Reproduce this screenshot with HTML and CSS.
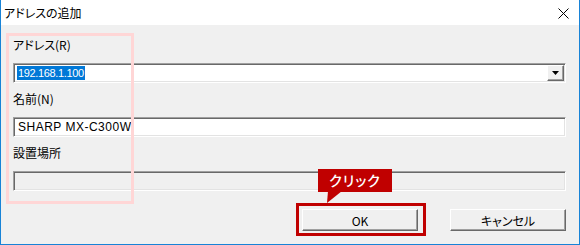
FILE: index.html
```html
<!DOCTYPE html>
<html lang="ja">

<head>
  <meta charset="UTF-8">
  <meta name="viewport" content="width=device-width, initial-scale=1.0">
  <title>アドレスの追加</title>
  <link rel="stylesheet" href="styles.css">
</head>

<body>
  <div class="window">
    <div class="titlebar">
      <span class="title">アドレスの追加</span>
      <svg class="close" width="11" height="11" viewBox="0 0 11 11">
        <path d="M0.5 0.5 L10.5 10.5 M10.5 0.5 L0.5 10.5" stroke="#000" stroke-width="1" fill="none" />
      </svg>
    </div>

    <div class="client">
      <div class="group">
        <span class="label">アドレス(R)</span>
        <div class="sunken combo">
          <span class="value"><span class="selected">192.168.1.100</span></span>
          <span class="drop">
            <svg width="7" height="4" viewBox="0 0 7 4"><path d="M0 0 H7 L3.5 4 Z" fill="#000" /></svg>
          </span>
        </div>
      </div>

      <div class="group">
        <span class="label">名前(N)</span>
        <div class="sunken edit">SHARP MX-C300W</div>
      </div>

      <div class="group">
        <span class="label">設置場所</span>
        <div class="sunken edit disabled"></div>
      </div>

      <div class="buttons">
        <span class="marked">
          <button type="button" class="btn">OK</button>
          <span class="callout">クリック</span>
        </span>
        <button type="button" class="btn">キャンセル</button>
      </div>

      <!-- 入力欄の注目枠 -->
      <div class="group-mark"></div>
    </div>
  </div>
</body>

</html>
```

FILE: styles.css
```css
body {
  margin: 0;
  font-family: "Noto Sans CJK JP", sans-serif;
  font-size: 12px;
  color: #000;
}

.window {
  width: 580px;
  height: 245px;
  box-sizing: border-box;
  border: 1px solid #1883d7;
  border-top: none;
  display: flex;
  flex-direction: column;
}

.titlebar {
  height: 25px;
  background-color: #fff;
  display: flex;
  align-items: center;
  justify-content: space-between;
  padding: 0 10px 0 3px;
}

.title {
  font-feature-settings: "palt";
  font-size: 12px;
  line-height: 25px;
}

.close {
  display: block;
  margin-top: 1px;
}

.client {
  flex: 1;
  position: relative;
  background-color: #f0f0f0;
  padding: 12px 13px 0 12px;
}

.group {
  margin-bottom: 8px;
}

.label {
  display: block;
  font-feature-settings: "palt";
  line-height: 16px;
  margin-bottom: 10px;
}

.sunken {
  box-sizing: border-box;
  height: 20px;
  border: 1px solid;
  border-color: #a0a0a0 #fff #fff #a0a0a0;
  box-shadow: inset 1px 1px 0 #696969, inset -1px -1px 0 #e3e3e3;
  background-color: #fff;
  font-family: "Liberation Sans", sans-serif;
  font-size: 11px;
}

.combo {
  display: flex;
  padding: 1px 1px 1px 2px;
}

.combo .value {
  flex: 1;
  padding: 1px 0 0 1px;
}

.selected {
  display: inline-block;
  background-color: #0078d7;
  color: #fff;
  line-height: 14px;
  padding: 0 1px;
  letter-spacing: -0.35px;
}

.drop {
  box-sizing: border-box;
  width: 17px;
  height: 16px;
  background-color: #f0f0f0;
  border: 1px solid;
  border-color: #fff #696969 #696969 #fff;
  box-shadow: inset -1px -1px 0 #a0a0a0;
  display: flex;
  align-items: center;
  justify-content: center;
}

.drop svg {
  display: block;
}

.edit {
  padding: 2px 0 0 4px;
  font-size: 12px;
  line-height: 14px;
  letter-spacing: 0.5px;
}

.edit.disabled {
  background-color: #f0f0f0;
}

.buttons {
  display: flex;
  justify-content: flex-end;
  gap: 32px;
  margin-top: 18px;
}

.btn {
  box-sizing: border-box;
  width: 116px;
  height: 22px;
  margin: 0;
  padding: 0;
  background-color: #f0f0f0;
  border: 1px solid;
  border-color: #fff #696969 #696969 #fff;
  box-shadow: inset -1px -1px 0 #a0a0a0;
  font-family: "Noto Sans CJK JP", sans-serif;
  font-feature-settings: "palt";
  font-size: 12px;
  color: #000;
}

.marked {
  position: relative;
}

.marked::before {
  content: "";
  position: absolute;
  left: -6px;
  top: -6px;
  right: -8px;
  bottom: -5px;
  border: 3px solid #c00000;
}

.callout {
  position: absolute;
  left: 16px;
  top: -40px;
  width: 74px;
  height: 23px;
  background-color: #c00000;
  color: #fff;
  font-size: 14px;
  font-weight: 500;
  font-feature-settings: "palt";
  line-height: 23px;
  text-align: center;
  letter-spacing: 1px;
}

.callout::after {
  content: "";
  position: absolute;
  left: 9px;
  top: 22px;
  width: 15px;
  height: 12px;
  background-color: #c00000;
  clip-path: polygon(1px 0, 100% 0, 0 100%);
}

.group-mark {
  position: absolute;
  left: 5px;
  top: 8px;
  width: 128px;
  height: 171px;
  box-sizing: border-box;
  border: 3px solid #ffd6d6;
  pointer-events: none;
}
```
